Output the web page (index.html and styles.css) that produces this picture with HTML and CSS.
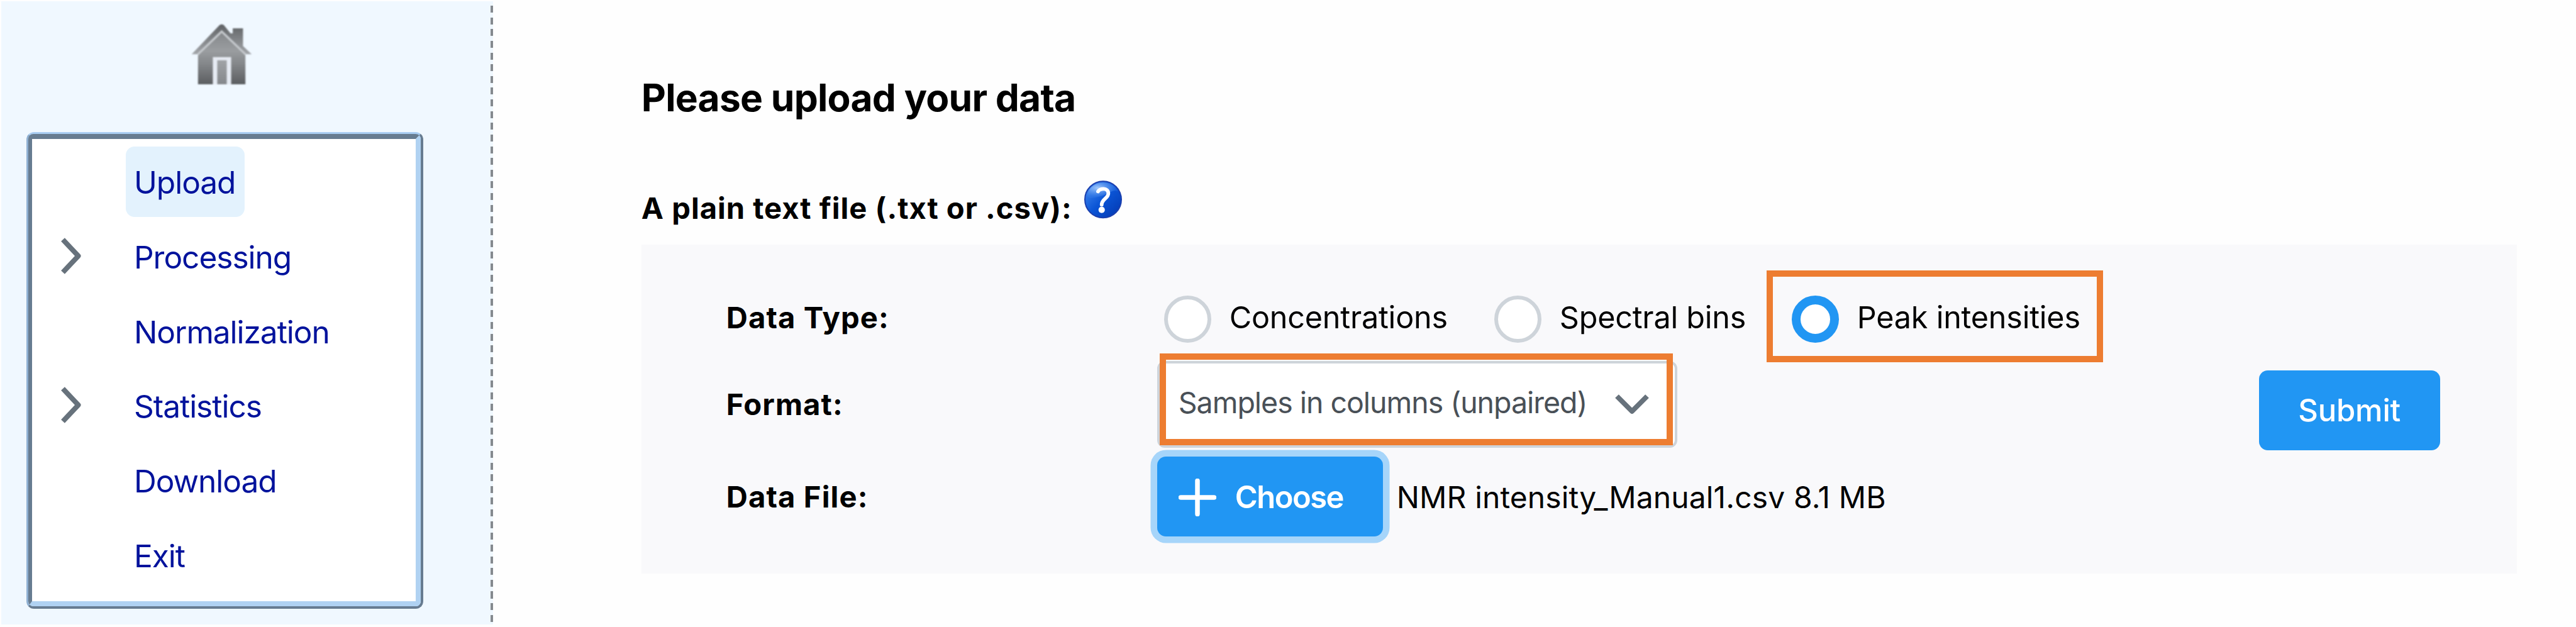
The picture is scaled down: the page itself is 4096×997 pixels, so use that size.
FILE: index.html
```html
<!DOCTYPE html>
<html lang="en">
<head>
<meta charset="utf-8">
<title>Upload</title>
<link rel="stylesheet" href="styles.css">
</head>
<body>
<div class="page">
  <aside class="sidebar">
    <svg class="home" viewBox="60 58 382 384" aria-label="Home">
      <defs>
        <linearGradient id="roof" x1="0" y1="0" x2="0" y2="1"><stop offset="0" stop-color="#5f6265"/><stop offset="1" stop-color="#a3a6aa"/></linearGradient>
        <linearGradient id="wall" x1="0" y1="0" x2="0" y2="1"><stop offset="0" stop-color="#85888b"/><stop offset=".35" stop-color="#9a9da0"/><stop offset=".6" stop-color="#85888b"/><stop offset="1" stop-color="#5b5d60"/></linearGradient>
        <linearGradient id="door" x1="0" y1="0" x2="0" y2="1"><stop offset="0" stop-color="#a0a3a6"/><stop offset="1" stop-color="#85888c"/></linearGradient>
      </defs>
      <path fill="url(#roof)" d="M322 86H387V198L442 250H396L252 108L108 250H62L238 66Q252 56 266 66L308 118H322Z"/>
      <path fill="url(#wall)" d="M252 112L402 256V440H102V256Z"/>
      <path fill="none" stroke="#c3c7cb" stroke-width="13" d="M102 250L252 106L402 250"/>
      <path fill="#e6ebf3" d="M196 268H312V441H196Z"/>
      <path fill="url(#door)" d="M224 288H284V440H224Z"/>
    </svg>
    <nav class="menu"><ul class="menu-list">
      <li class="item"><span class="arrow"></span><a class="link active">Upload</a></li>
      <li class="item"><span class="arrow"><svg class="chev" viewBox="0 0 33 58"><path d="M4 3L28.500 29L4 55"/></svg></span><a class="link">Processing</a></li>
      <li class="item"><span class="arrow"></span><a class="link">Normalization</a></li>
      <li class="item"><span class="arrow"><svg class="chev" viewBox="0 0 33 58"><path d="M4 3L28.500 29L4 55"/></svg></span><a class="link">Statistics</a></li>
      <li class="item"><span class="arrow"></span><a class="link">Download</a></li>
      <li class="item"><span class="arrow"></span><a class="link">Exit</a></li>
    </ul></nav>
  </aside>
  <main class="main">
    <h1 class="title">Please upload your data</h1>
    <div class="subtitle"><span class="subtext">A plain text file (.txt or .csv):</span>
      <svg class="help" viewBox="72 55 238 240" aria-label="Help">
        <defs><linearGradient id="ball" x1="0" y1="0" x2="1" y2="1"><stop offset="0" stop-color="#4a8ef0"/><stop offset=".5" stop-color="#0b55d6"/><stop offset="1" stop-color="#0236ae"/></linearGradient>
        <radialGradient id="shine" cx=".35" cy=".35" r=".6"><stop offset="0" stop-color="#a5cbfd"/><stop offset="1" stop-color="#3f85ec" stop-opacity=".3"/></radialGradient></defs>
        <circle cx="191" cy="175" r="115" fill="url(#ball)" stroke="#1b3fae" stroke-width="8"/>
        <path fill="url(#shine)" d="M90 150C100 95 145 68 192 68C235 68 270 90 284 122C240 110 220 150 160 158C120 166 100 170 90 150Z"/>
        <path fill="none" stroke="#fff" stroke-width="23" stroke-linecap="round" d="M159 124C168 104 224 98 224 136C224 168 182 172 182 208"/>
        <circle cx="182" cy="240" r="20" fill="#fff"/>
      </svg>
    </div>
    <section class="panel">
      <div class="rows">
        <div class="row row-type"><span class="label">Data Type:</span>
          <span class="opt opt1"><i class="radio"></i><span>Concentrations</span></span>
          <span class="opt opt2"><i class="radio"></i><span>Spectral bins</span></span>
          <span class="opt opt3"><i class="radio on"></i><span>Peak intensities</span><b class="mark mark-peak"></b></span>
        </div>
        <div class="row row-format"><span class="label">Format:</span>
          <div class="select"><span class="select-text">Samples in columns (unpaired)</span>
            <svg class="down" viewBox="0 0 56 34"><path d="M4 4L28 28L52 4"/></svg><b class="mark mark-format"></b></div>
        </div>
        <div class="row row-file"><span class="label">Data File:</span>
          <button class="btn choose"><svg class="plus" viewBox="0 0 60 60"><path d="M3.500 30H56.500M30 3.500V56.500"/></svg><span>Choose</span></button>
          <span class="file">NMR intensity_Manual1.csv 8.1 MB</span>
        </div>
      </div>
      <button class="btn submit">Submit</button>
    </section>
  </main>
</div>
</body>
</html>
```

FILE: styles.css
```css
* { box-sizing: border-box; }
body { margin: 0; background: #fff; font-family: Inter, "Liberation Sans", sans-serif; }
.page { display: flex; width: 4096px; height: 997px; overflow: hidden; background: #fefefe; }
.sidebar {
  width: 782px; height: 991px; margin: 2px 0 0 2px; padding: 36px 0 0 39.5px;
  background: repeating-linear-gradient(to bottom, #858a8f 0 11px, transparent 11px 18.63px) right 0 top 7px / 4px 100% no-repeat, #f0f8ff;
}
.home { display: block; width: 96.5px; height: 96.5px; margin-left: 262px; filter: blur(0.8px); }
.menu {
  width: 631px; height: 758px; margin-top: 75.6px; border-style: solid;
  border-width: 3px 4px 4px 3px; border-color: #a9cdf2 #677c91 #677c91 #8fb0d2; border-radius: 12px;
}
.menu-list {
  height: 100%; margin: 0; padding: 8.4px 0 0; list-style: none; background: #fff; border-style: solid;
  border-width: 8px 8px 8px 6px; border-color: #677c91 #b0d2f2 #b0d2f2 #677c91; border-radius: 8px;
}
.item { display: flex; align-items: center; height: 118.85px; }
.arrow { width: 149px; padding-left: 45px; }
.chev { display: block; width: 33px; height: 58px; margin-top: -2px; }
.chev path, .down path { fill: none; stroke: #67727c; stroke-width: 8; stroke-linejoin: round; }
.link { height: 112px; padding: 2px 15px 0 13.5px; border-radius: 14px; font-size: 49.6px; line-height: 110px; letter-spacing: -1.05px; color: #00129c; }
.active { background: #e3f2fd; }
.main { flex: 1; padding: 116.6px 93.8px 0 235.8px; }
.title { margin: 0; font-size: 60.5px; line-height: 76px; font-weight: 700; letter-spacing: -0.8px; color: #000; }
.subtitle { display: flex; align-items: flex-start; height: 196.4px; padding-top: 94.6px; }
.subtext { width: 686px; padding-top: 13.9px; font-size: 47.2px; line-height: 60px; font-weight: 700; letter-spacing: 0.98px; white-space: nowrap; }
.help { width: 60px; height: 60.6px; margin-left: 18px; filter: blur(0.6px); }
.panel { display: flex; height: 523.3px; padding: 47.6px 122.7px 0 135px; background: #f9f9fb; }
.rows { flex: 1; }
.row { display: flex; align-items: center; height: 137.5px; }
.row-file { height: 156.6px; }
.label { width: 685px; font-size: 47.2px; font-weight: 700; line-height: 60px; letter-spacing: 1.1px; }
.opt { display: flex; align-items: center; position: relative; font-size: 48.5px; line-height: 60px; letter-spacing: -0.22px; white-space: nowrap; }
.opt1 { width: 525px; margin-left: 11px; }
.opt2 { width: 473px; }
.radio { width: 75px; height: 75px; margin: 5px 29px 0 0; border: 6.5px solid #ced4da; border-radius: 50%; background: #fff; }
.on { border: 14.5px solid #2196f3; }
.mark { position: absolute; border: 10.5px solid #ed7d31; }
.mark-peak { left: -39.5px; top: -35.6px; width: 535px; height: 146px; }
.select { position: relative; display: flex; align-items: center; width: 827px; height: 137.5px; padding: 0 40px 0 30px; border: 4px solid #ced4da; border-radius: 12px; background: #fff; }
.select-text { flex: 1; font-size: 46.5px; line-height: 60px; margin-top: -6px; letter-spacing: -1.03px; color: #495057; white-space: nowrap; }
.down { width: 56px; height: 34px; }
.mark-format { left: 0; top: -16.4px; width: 816px; height: 146.4px; }
.btn { display: flex; align-items: center; height: 127px; border: 0; border-radius: 14px; background: #2196f3; color: #fff; font-family: inherit; font-size: 49px; font-weight: 600; line-height: 60px; }
.choose { width: 359px; padding: 2px 0 0 34px; box-shadow: 0 0 0 10.5px #a6d5fa; letter-spacing: -1.6px; }
.plus { width: 60px; height: 60px; margin-right: 30px; }
.plus path { fill: none; stroke: #fff; stroke-width: 7.5; stroke-linecap: round; }
.file { margin-left: 22px; font-size: 48px; line-height: 60px; padding-top: 3px; letter-spacing: 0.12px; white-space: nowrap; }
.submit { justify-content: center; width: 287.7px; margin-top: 152.2px; font-weight: 500; padding: 2px 0 0; letter-spacing: -0.2px; }
```
